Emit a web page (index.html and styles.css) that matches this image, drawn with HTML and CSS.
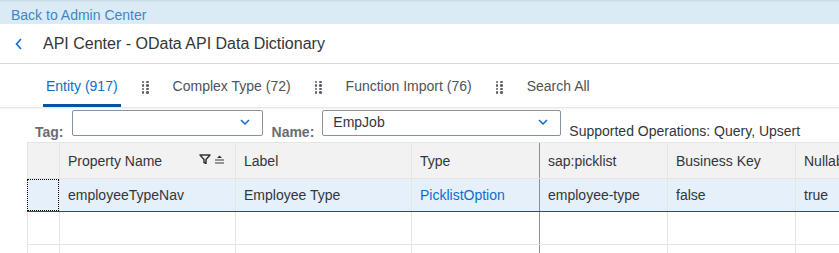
FILE: index.html
```html
<!DOCTYPE html>
<html>
<head>
<meta charset="utf-8">
<link rel="stylesheet" href="styles.css">
</head>
<body>
<div class="page">
  <div class="topbar"><a class="back-link">Back to Admin Center</a></div>
  <div class="header">
    <svg class="back-icon" width="10" height="12" viewBox="0 0 10 12"><path d="M7 1 L2.5 6 L7 11" fill="none" stroke="#0a6ed1" stroke-width="1.6"/></svg>
    <span class="title">API Center - OData API Data Dictionary</span>
  </div>
  <div class="tabs">
    <div class="tab active">Entity (917)</div>
    <span class="grip"><i></i><i></i><i></i><i></i><i></i><i></i><i></i><i></i></span>
    <div class="tab">Complex Type (72)</div>
    <span class="grip"><i></i><i></i><i></i><i></i><i></i><i></i><i></i><i></i></span>
    <div class="tab">Function Import (76)</div>
    <span class="grip"><i></i><i></i><i></i><i></i><i></i><i></i><i></i><i></i></span>
    <div class="tab">Search All</div>
  </div>
  <div class="filters">
    <span class="flabel">Tag:</span>
    <div class="select tag-select"><span class="val"></span><svg class="chev" width="10" height="6" viewBox="0 0 10 6"><path d="M1 1 L5 5 L9 1" fill="none" stroke="#0a6ed1" stroke-width="1.5"/></svg></div>
    <span class="flabel">Name:</span>
    <div class="select name-select"><span class="val">EmpJob</span><svg class="chev" width="10" height="6" viewBox="0 0 10 6"><path d="M1 1 L5 5 L9 1" fill="none" stroke="#0a6ed1" stroke-width="1.5"/></svg></div>
    <span class="ops">Supported Operations: Query, Upsert</span>
  </div>
  <div class="table">
    <div class="row head">
      <div class="cell sel"></div>
      <div class="cell pname">Property Name
        <span class="hicons">
          <svg width="12" height="10" viewBox="0 0 12 10"><path d="M1 1 H11 L7 5.5 V9.5 L5 8.5 V5.5 Z" fill="none" stroke="#32363a" stroke-width="1.5" stroke-linejoin="round"/></svg>
          <svg width="11" height="10" viewBox="0 0 11 10"><path d="M5.5 1.5 L3 4 H8 Z" fill="#32363a"/><path d="M1 6 H10 M1 9 H10" stroke="#32363a" stroke-width="1.2"/></svg>
        </span>
      </div>
      <div class="cell">Label</div>
      <div class="cell frozen">Type</div>
      <div class="cell">sap:picklist</div>
      <div class="cell">Business Key</div>
      <div class="cell">Nullable</div>
    </div>
    <div class="row data selected">
      <div class="cell sel focus"></div>
      <div class="cell">employeeTypeNav</div>
      <div class="cell">Employee Type</div>
      <div class="cell frozen link">PicklistOption</div>
      <div class="cell">employee-type</div>
      <div class="cell">false</div>
      <div class="cell">true</div>
    </div>
    <div class="row data empty">
      <div class="cell sel"></div>
      <div class="cell"></div>
      <div class="cell"></div>
      <div class="cell frozen"></div>
      <div class="cell"></div>
      <div class="cell"></div>
      <div class="cell"></div>
    </div>
    <div class="row data empty">
      <div class="cell sel"></div>
      <div class="cell"></div>
      <div class="cell"></div>
      <div class="cell frozen"></div>
      <div class="cell"></div>
      <div class="cell"></div>
      <div class="cell"></div>
    </div>
  </div>
</div>
</body>
</html>
```
FILE: styles.css
```css
html, body {
  margin: 0;
  padding: 0;
  background: #ffffff;
  overflow: hidden;
}
.page {
  width: 839px;
  height: 253px;
  overflow: hidden;
  font-family: "Liberation Sans", Arial, sans-serif;
  color: #32363a;
}
.topbar {
  height: 24px;
  background: #dbebf5;
  box-shadow: inset 0 2px 2px -1px #c3d5e2;
  display: flex;
  align-items: flex-end;
  padding-left: 11px;
  box-sizing: border-box;
  padding-bottom: 0;
}
.back-link {
  font-size: 14px;
  color: #3f86c6;
  line-height: 17px;
}
.header {
  height: 40px;
  box-sizing: border-box;
  border-bottom: 1px solid #d9d9d9;
  display: flex;
  align-items: center;
  padding-left: 14px;
}
.back-icon {
  margin-right: 19px;
  margin-top: 1px;
}
.title {
  font-size: 16px;
  color: #32363a;
}
.tabs {
  height: 44px;
  box-sizing: border-box;
  display: flex;
  align-items: stretch;
  padding-left: 43px;
  border-bottom: 1px solid #e8e8e8;
  box-shadow: 0 1px 2px rgba(0,0,0,0.06);
}
.tab {
  font-size: 14px;
  color: #4d5358;
  padding: 0 3px;
  display: flex;
  align-items: center;
  box-sizing: border-box;
  border-bottom: 3px solid transparent;
  padding-top: 4px;
}
.tab.active {
  color: #0a6ed1;
  border-bottom-color: #0854a0;
}
.grip {
  display: grid;
  grid-template-columns: 2.5px 2.5px;
  grid-auto-rows: 2.5px;
  column-gap: 2px;
  row-gap: 1px;
  align-self: center;
  margin: 0 21px 0 21px;
  padding-top: 3px;
}
.grip i {
  width: 2.5px;
  height: 2.5px;
  background: #5b6066;
  border-radius: 50%;
}
.filters {
  display: flex;
  align-items: flex-end;
  height: 29px;
  padding-left: 35px;
  margin-top: 2px;
}
.flabel {
  font-size: 14px;
  font-weight: bold;
  color: #6a6d70;
  margin-right: 8px;
  line-height: 18px;
  margin-bottom: -2px;
}
.select {
  height: 26px;
  box-sizing: border-box;
  border: 1px solid #89919a;
  border-radius: 2px;
  display: flex;
  align-items: center;
  justify-content: space-between;
  padding: 0 12px 0 10px;
  margin-right: 9px;
  margin-bottom: 3px;
}
.tag-select { width: 191px; }
.name-select { width: 239px; }
.val {
  font-size: 14px;
  color: #32363a;
  margin-top: -3px;
}
.chev { margin-top: -3px; }
.ops {
  font-size: 14px;
  color: #32363a;
  margin-left: -1px;
  line-height: 18px;
  margin-bottom: -1px;
}
.table {
  margin-left: 27px;
  margin-top: 3px;
  width: 812px;
  overflow: hidden;
}
.row {
  display: grid;
  grid-template-columns: 32px 176px 176px 128px 128px 128px 128px;
  border-top: 1px solid #e5e5e5;
}
.row.head {
  height: 35px;
  background: #f2f2f2;
}
.row.data {
  height: 32px;
}
.row.selected {
  background: #e5f0fa;
  border-bottom: 1px solid #0854a0;
}
.row.selected + .row {
  border-top: none;
}
.cell {
  font-size: 14px;
  color: #32363a;
  display: flex;
  align-items: center;
  padding-left: 8px;
  border-left: 1px solid #e5e5e5;
  box-sizing: border-box;
  white-space: nowrap;
  overflow: hidden;
}
.cell.sel {
  padding: 0;
}
.cell.frozen + .cell {
  border-left: 1px solid #8c9196;
}
.cell.pname {
  justify-content: space-between;
  padding-right: 10px;
}
.hicons {
  display: flex;
  gap: 3px;
  align-items: center;
  margin-top: -4px;
}
.cell.focus {
  border: 1px dotted #000000;
}
.link {
  color: #0a6ed1;
}
```
